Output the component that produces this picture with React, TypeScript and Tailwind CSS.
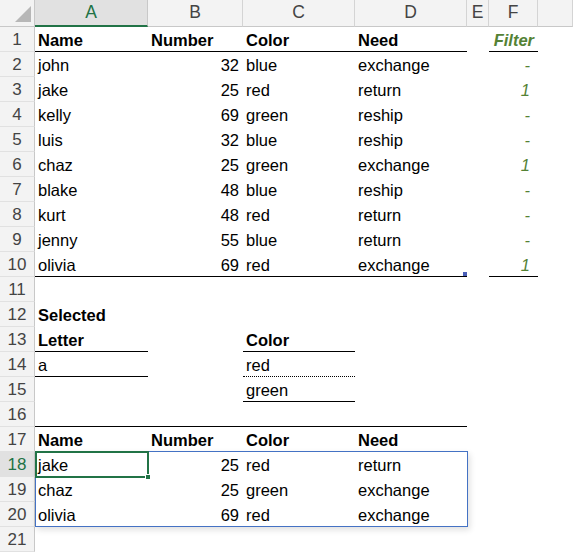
import React from 'react';

type CellDef = {
  t?: string;
  right?: boolean;
  bold?: boolean;
  green?: boolean;
  b?: 'solid' | 'dotted';
};

const COLS = ['A', 'B', 'C', 'D', 'E', 'F', 'G'];

const people: [string, number, string, string, string][] = [
  ['john', 32, 'blue', 'exchange', '-'],
  ['jake', 25, 'red', 'return', '1'],
  ['kelly', 69, 'green', 'reship', '-'],
  ['luis', 32, 'blue', 'reship', '-'],
  ['chaz', 25, 'green', 'exchange', '1'],
  ['blake', 48, 'blue', 'reship', '-'],
  ['kurt', 48, 'red', 'return', '-'],
  ['jenny', 55, 'blue', 'return', '-'],
  ['olivia', 69, 'red', 'exchange', '1'],
];

const filtered: [string, number, string, string][] = [
  ['jake', 25, 'red', 'return'],
  ['chaz', 25, 'green', 'exchange'],
  ['olivia', 69, 'red', 'exchange'],
];

function buildRows(): Record<string, CellDef>[] {
  const rows: Record<string, CellDef>[] = [];
  rows.push({
    A: { t: 'Name', bold: true, b: 'solid' },
    B: { t: 'Number', bold: true, b: 'solid' },
    C: { t: 'Color', bold: true, b: 'solid' },
    D: { t: 'Need', bold: true, b: 'solid' },
    F: { t: 'Filter', bold: true, green: true, right: true, b: 'solid' },
  });
  people.forEach((p, i) => {
    const last = i === people.length - 1;
    const b = last ? 'solid' : undefined;
    rows.push({
      A: { t: p[0], b },
      B: { t: String(p[1]), right: true, b },
      C: { t: p[2], b },
      D: { t: p[3], b },
      F: { t: p[4], green: true, right: true, b },
    });
  });
  rows.push({});
  rows.push({ A: { t: 'Selected', bold: true } });
  rows.push({
    A: { t: 'Letter', bold: true, b: 'solid' },
    C: { t: 'Color', bold: true, b: 'solid' },
  });
  rows.push({ A: { t: 'a', b: 'solid' }, C: { t: 'red', b: 'dotted' } });
  rows.push({ C: { t: 'green', b: 'solid' } });
  rows.push({ A: { b: 'solid' }, B: { b: 'solid' }, C: { b: 'solid' }, D: { b: 'solid' } });
  rows.push({
    A: { t: 'Name', bold: true },
    B: { t: 'Number', bold: true },
    C: { t: 'Color', bold: true },
    D: { t: 'Need', bold: true },
  });
  filtered.forEach(p => {
    rows.push({
      A: { t: p[0] },
      B: { t: String(p[1]), right: true },
      C: { t: p[2] },
      D: { t: p[3] },
    });
  });
  rows.push({});
  return rows;
}

function Cell({ c }: { c?: CellDef }) {
  if (!c) return <div className="h-[25px]" />;
  const border =
    c.b === 'solid'
      ? 'border-b border-black'
      : c.b === 'dotted'
      ? 'border-b border-dotted border-black'
      : '';
  const weight = c.bold ? 'font-bold' : 'font-normal';
  const color = c.green ? 'text-[#548235] italic' : 'text-black';
  const align = c.right
    ? c.green && !c.bold
      ? 'justify-end pr-[8px]'
      : 'justify-end pr-[4px]'
    : 'justify-start pl-[3px]';
  return (
    <div className={`h-[25px] flex items-center pt-[2px] whitespace-nowrap ${border} ${weight} ${color} ${align}`}>
      {c.t}
    </div>
  );
}

export default function App() {
  const rows = buildRows();
  const selectedRow = 18;

  return (
    <div
      className="relative w-[573px] h-[553px] overflow-hidden bg-white text-[16.5px] leading-none"
      style={{ fontFamily: '"Liberation Sans", Arial, sans-serif' }}
    >
      <div className="grid grid-cols-[35px_113px_95px_112px_112px_22px_49px_1fr] grid-rows-[27px]">
        {/* corner */}
        <div className="h-[27px] bg-[#f3f3f3] border-r border-b border-[#c8c8c8] flex items-end justify-end pr-[3px] pb-[4px]">
          <div className="w-0 h-0 border-l-[16px] border-l-transparent border-b-[16px] border-b-[#b7b7b7]" />
        </div>
        {COLS.map(col => (
          <div
            key={col}
            className={`h-[27px] flex items-center justify-center text-[17.5px] border-r ${
              col === 'A'
                ? 'bg-[#e1e1e1] text-[#217346] border-b-2 border-b-[#217346] border-r-[#c8c8c8]'
                : 'bg-[#f3f3f3] text-[#444444] border-b border-b-[#c8c8c8] border-r-[#d4d4d4]'
            }`}
          >
            {col === 'G' ? '' : col}
          </div>
        ))}

        {rows.map((r, i) => {
          const n = i + 1;
          const sel = n === selectedRow;
          return (
            <React.Fragment key={n}>
              <div
                className={`h-[25px] flex items-center justify-center text-[17px] border-r border-r-[#c8c8c8] border-b border-b-[#e1e1e1] ${
                  sel ? 'bg-[#e1e1e1] text-[#217346]' : 'bg-[#f3f3f3] text-[#444444]'
                }`}
              >
                {n}
              </div>
              {COLS.map(col => (
                <Cell key={col} c={r[col]} />
              ))}
            </React.Fragment>
          );
        })}
      </div>

      {/* spill range outline */}
      <div className="absolute left-[35px] top-[451px] w-[433px] h-[76px] border border-[#4472c4] shadow-[2px_3px_6px_rgba(0,0,0,0.12)] pointer-events-none" />

      {/* active cell */}
      <div className="absolute left-[35px] top-[451px] w-[114px] h-[27px] border-2 border-[#217346] pointer-events-none" />
      <div className="absolute left-[145px] top-[474px] w-[6px] h-[6px] bg-[#217346] border border-white pointer-events-none" />

      {/* table resize handle */}
      <div className="absolute left-[463px] top-[272px] w-[4px] h-[4px] bg-[#4a5fb8]" />
    </div>
  );
}
